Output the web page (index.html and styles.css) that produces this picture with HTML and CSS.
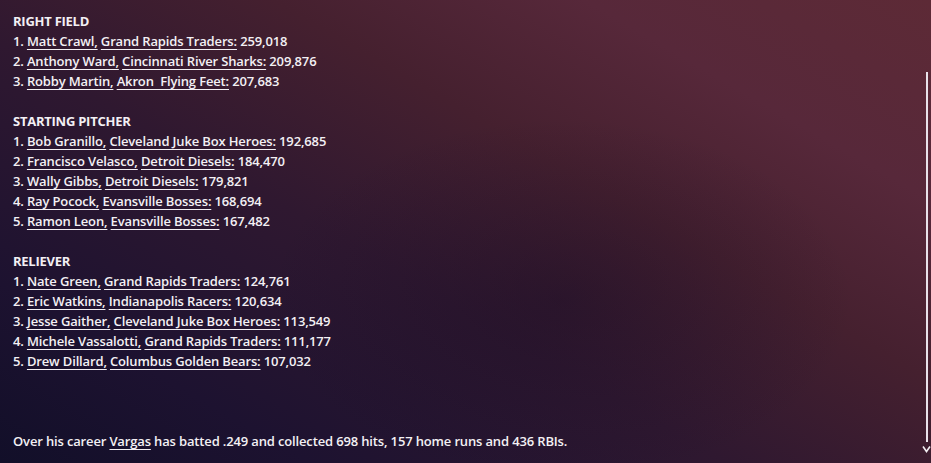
FILE: index.html
```html
<!DOCTYPE html>
<html>
<head>
<meta charset="utf-8">
<link rel="stylesheet" href="styles.css">
</head>
<body>
<div class="page">
  <div class="content">
    <div class="section">
      <div class="heading">RIGHT FIELD</div>
      <div class="row">1. <a class="lnk">Matt Crawl,</a> <a class="lnk">Grand Rapids Traders:</a> 259,018</div>
      <div class="row">2. <a class="lnk">Anthony Ward,</a> <a class="lnk">Cincinnati River Sharks:</a> 209,876</div>
      <div class="row">3. <a class="lnk">Robby Martin,</a> <a class="lnk">Akron&nbsp; Flying Feet:</a> 207,683</div>
    </div>
    <div class="section">
      <div class="heading">STARTING PITCHER</div>
      <div class="row">1. <a class="lnk">Bob Granillo,</a> <a class="lnk">Cleveland Juke Box Heroes:</a> 192,685</div>
      <div class="row">2. <a class="lnk">Francisco Velasco,</a> <a class="lnk">Detroit Diesels:</a> 184,470</div>
      <div class="row">3. <a class="lnk">Wally Gibbs,</a> <a class="lnk">Detroit Diesels:</a> 179,821</div>
      <div class="row">4. <a class="lnk">Ray Pocock,</a> <a class="lnk">Evansville Bosses:</a> 168,694</div>
      <div class="row">5. <a class="lnk">Ramon Leon,</a> <a class="lnk">Evansville Bosses:</a> 167,482</div>
    </div>
    <div class="section">
      <div class="heading">RELIEVER</div>
      <div class="row">1. <a class="lnk">Nate Green,</a> <a class="lnk">Grand Rapids Traders:</a> 124,761</div>
      <div class="row">2. <a class="lnk">Eric Watkins,</a> <a class="lnk">Indianapolis Racers:</a> 120,634</div>
      <div class="row">3. <a class="lnk">Jesse Gaither,</a> <a class="lnk">Cleveland Juke Box Heroes:</a> 113,549</div>
      <div class="row">4. <a class="lnk">Michele Vassalotti,</a> <a class="lnk">Grand Rapids Traders:</a> 111,177</div>
      <div class="row">5. <a class="lnk">Drew Dillard,</a> <a class="lnk">Columbus Golden Bears:</a> 107,032</div>
    </div>
    <div class="summary">Over his career <a class="lnk">Vargas</a> has batted .249 and collected 698 hits, 157 home runs and 436 RBIs.</div>
  </div>
  <div class="scrollbar">
    <div class="track"></div>
    <svg class="chev" width="9" height="8" viewBox="0 0 9 8"><path d="M1 1.5 L4.5 6.5 L8 1.5" fill="none" stroke="#f2eef2" stroke-width="1.6"/></svg>
  </div>
</div>
</body>
</html>
```
FILE: styles.css
```css
html, body {
  margin: 0;
  padding: 0;
  height: 100%;
}
body {
  font-family: "Open Sans", "Noto Sans", sans-serif;
  font-size: 13px;
  color: #f3f0f4;
  overflow: hidden;
}
.page {
  position: relative;
  width: 931px;
  height: 463px;
  overflow: hidden;
  background:
    radial-gradient(ellipse 420px 260px at 560px 300px, rgba(20, 10, 35, 0.35), rgba(20, 10, 35, 0) 70%),
    linear-gradient(30deg, #120f29 0%, #1d1230 18%, #2f1830 42%, #45202f 62%, #57283a 80%, #5d2a36 100%);
}
.content {
  padding: 11px 0 0 13px;
  display: flex;
  flex-direction: column;
  gap: 20px;
}
.section {
  display: flex;
  flex-direction: column;
}
.heading, .row, .summary {
  height: 20px;
  line-height: 20px;
  white-space: nowrap;
}
.heading {
  font-weight: 700;
  letter-spacing: -0.25px;
}
.row, .summary {
  font-weight: 600;
  letter-spacing: -0.15px;
}
.summary {
  margin-top: 40px;
}
.lnk {
  color: inherit;
  text-decoration: underline;
  text-decoration-thickness: 1px;
  text-underline-offset: 3px;
}
.scrollbar {
  position: absolute;
  right: 0;
  top: 72px;
  width: 10px;
  height: 381px;
  display: flex;
  flex-direction: column;
  align-items: center;
}
.track {
  width: 2px;
  flex: 1;
  background: #e9e2ea;
  margin-left: 2px;
}
.chev {
  margin-top: 3px;
}
```
